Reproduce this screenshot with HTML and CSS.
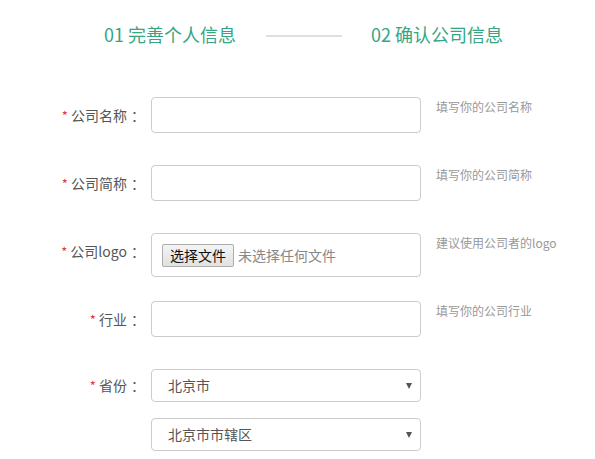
FILE: index.html
```html
<!DOCTYPE html>
<html lang="zh-CN">
<head>
<meta charset="utf-8">
<title>确认公司信息</title>
<link rel="stylesheet" href="styles.css">
</head>
<body>
<div class="steps">
  <span class="step">01 完善个人信息</span>
  <span class="step-line"></span>
  <span class="step">02 确认公司信息</span>
</div>
<form class="form">
  <div class="row">
    <label class="label"><span class="req">*</span> 公司名称<span class="colon">：</span></label>
    <input class="input" type="text">
    <span class="hint">填写你的公司名称</span>
  </div>
  <div class="row">
    <label class="label"><span class="req">*</span> 公司简称<span class="colon">：</span></label>
    <input class="input" type="text">
    <span class="hint">填写你的公司简称</span>
  </div>
  <div class="row row-file">
    <label class="label"><span class="req">*</span> 公司logo<span class="colon">：</span></label>
    <div class="filebox">
      <button type="button" class="filebtn">选择文件</button>
      <span class="filename">未选择任何文件</span>
    </div>
    <span class="hint">建议使用公司者的logo</span>
  </div>
  <div class="row">
    <label class="label"><span class="req">*</span> 行业<span class="colon">：</span></label>
    <input class="input" type="text">
    <span class="hint">填写你的公司行业</span>
  </div>
  <div class="row row-select">
    <label class="label label-select"><span class="req">*</span> 省份<span class="colon">：</span></label>
    <div class="selects">
      <div class="select">北京市</div>
      <div class="select">北京市市辖区</div>
    </div>
  </div>
</form>
</body>
</html>
```
FILE: styles.css
```css
* { box-sizing: border-box; }
html, body {
  margin: 0;
  padding: 0;
  background: #fff;
  font-family: "Noto Sans CJK SC", "Noto Sans", sans-serif;
  color: #333;
}
.steps {
  display: flex;
  align-items: center;
  height: 67px;
  padding-left: 104px;
}
.step {
  font-size: 18px;
  color: #35a583;
  line-height: 24px;
  white-space: nowrap;
}
.step-line {
  width: 76px;
  height: 2px;
  background: #dedede;
  margin: 4px 29px 0 30px;
}
.form {
  margin-top: 30px;
}
.row {
  display: grid;
  grid-template-columns: 151px 270px auto;
  align-items: start;
  margin-bottom: 32px;
}
.row-file { margin-bottom: 24px; }
.row-select { margin-bottom: 0; }
.label {
  display: block;
  height: 36px;
  font-size: 14px;
  line-height: 36px;
  color: #555;
  text-align: right;
  padding-right: 6px;
  white-space: nowrap;
  overflow: hidden;
}
.label-select { height: 33px; line-height: 33px; }
.req {
  color: #e4393c;
  font-size: 13px;
  line-height: 1;
}
.colon {
  margin-left: 4px;
}
.input {
  display: block;
  width: 270px;
  height: 36px;
  border: 1px solid #ccc;
  border-radius: 4px;
  outline: none;
  margin: 0;
  background: #fff;
}
.hint {
  font-size: 12px;
  color: #999;
  line-height: 20px;
  padding-left: 15px;
  white-space: nowrap;
}
.filebox {
  height: 44px;
  border: 1px solid #ccc;
  border-radius: 4px;
  display: flex;
  align-items: center;
  padding-left: 10px;
}
.filebtn {
  font-family: inherit;
  font-size: 14px;
  color: #111;
  height: 23px;
  line-height: 20px;
  padding: 0 7px;
  border: 1px solid #adadad;
  border-radius: 2px;
  background: linear-gradient(#f4f4f4, #e1e1e1);
  margin: 0;
}
.filename {
  font-size: 14px;
  color: #888;
  margin-left: 4px;
}
.selects {
  display: flex;
  flex-direction: column;
  gap: 16px;
}
.select {
  position: relative;
  height: 33px;
  border: 1px solid #ccc;
  border-radius: 4px;
  font-size: 14px;
  line-height: 31px;
  padding-left: 16px;
  color: #555;
}
.select::after {
  content: "";
  position: absolute;
  right: 8px;
  top: 13px;
  border-left: 3.5px solid transparent;
  border-right: 3.5px solid transparent;
  border-top: 6px solid #555;
}
```
